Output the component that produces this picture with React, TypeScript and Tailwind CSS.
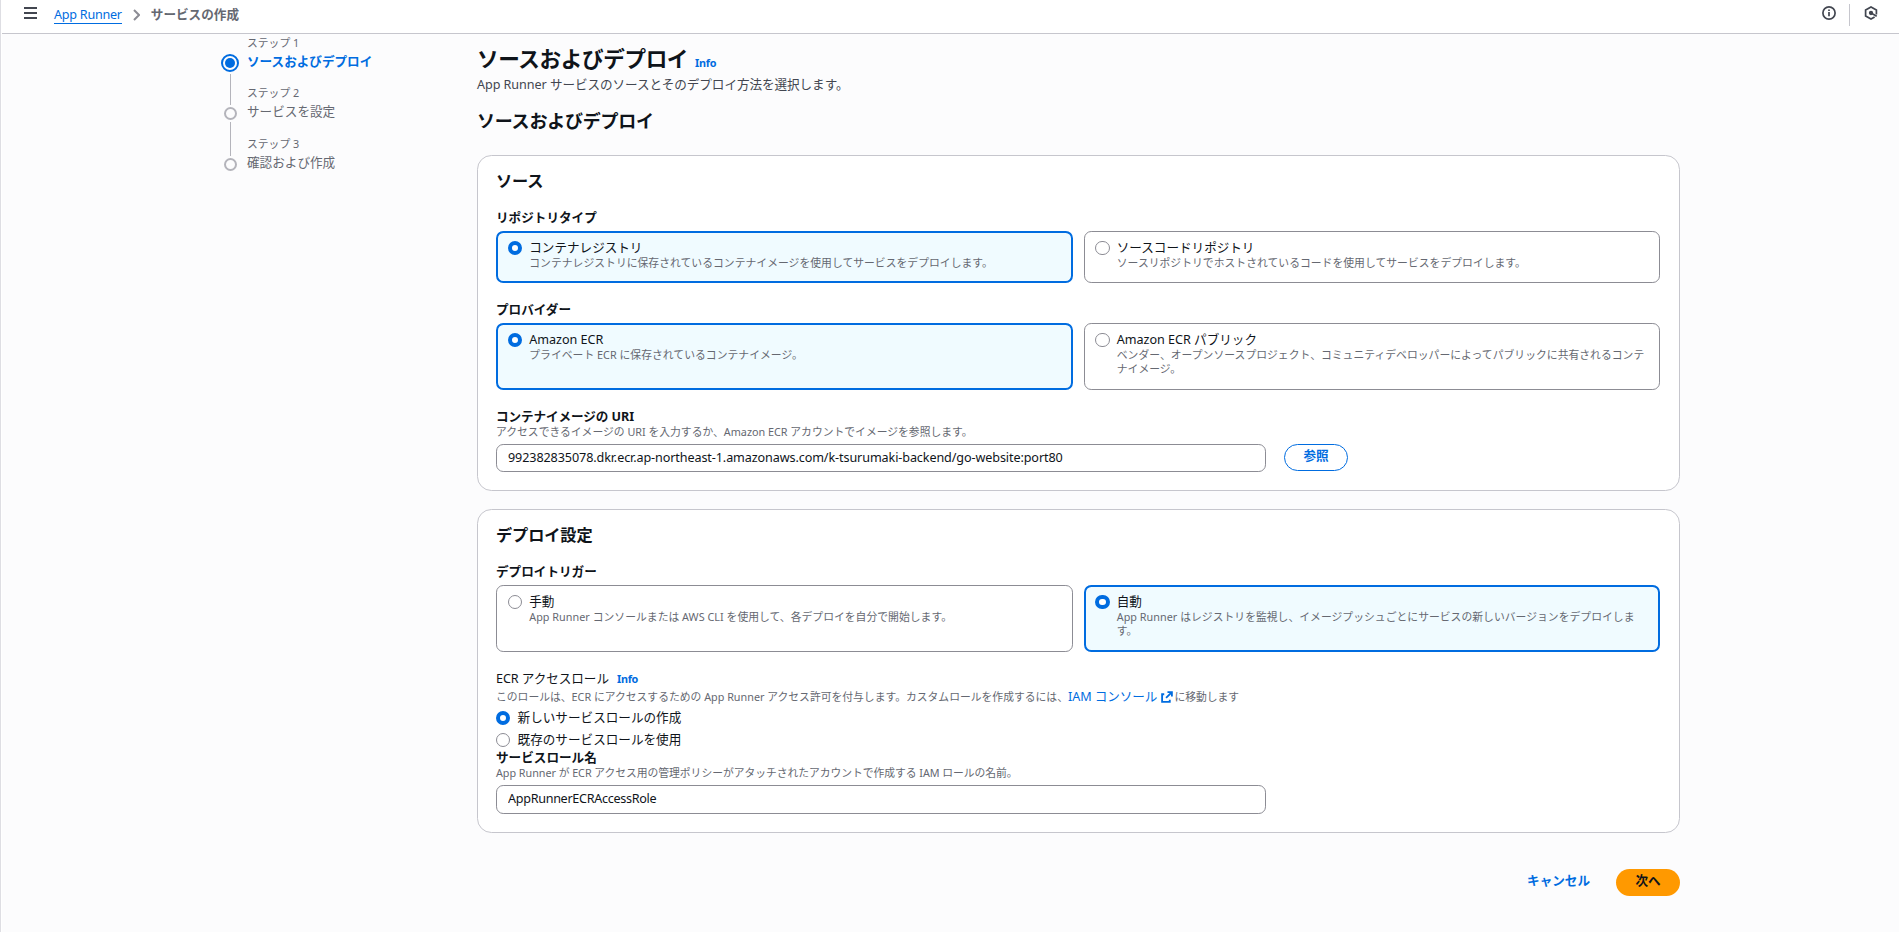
import type { ReactNode } from 'react';

interface OptionProps {
  label: string;
  description: string;
  checked?: boolean;
}

const Radio = ({ checked }: { checked?: boolean }) => (
  <span
    className={
      checked
        ? 'block size-[14.4px] shrink-0 rounded-full border-[4.5px] border-[#006ce0] bg-white'
        : 'block size-[14.4px] shrink-0 rounded-full border border-[#8c8c94] bg-white'
    }
  />
);

const Tile = ({ label, description, checked }: OptionProps) => (
  <div
    className={`flex flex-1 gap-[7.2px] rounded-[7.2px] pb-[9px] ${
      checked ? 'border-2 border-[#006ce0] bg-[#f0fbff] px-[9.7px] pt-[6px]' : 'border border-[#8c8c94] bg-white px-[10.7px] pt-[7px]'
    }`}
  >
    <div className="pt-[2px]">
      <Radio checked={checked} />
    </div>
    <div>
      <div className="leading-[18px] tracking-[-0.02px]">{label}</div>
      <div className="-mt-px text-[10.8px] leading-[14.4px] tracking-[0.03px] text-[#656871]">{description}</div>
    </div>
  </div>
);

const Container = ({ title, className, children }: { title: string; className?: string; children: ReactNode }) => (
  <section className={`rounded-[14.4px] border border-[#c6c6cd] bg-white pt-[15px] pr-[19px] pl-[18px] ${className}`}>
    <h3 className="text-[16.2px] leading-[20px] font-bold tracking-[-0.1px]">{title}</h3>
    {children}
  </section>
);

const Step = ({ index, title, active, last }: { index: number; title: string; active?: boolean; last?: boolean }) => (
  <li className="flex h-[50.4px] gap-[8px]">
    <div className="flex w-[18px] flex-col items-center">
      {active ? (
        <span className="mt-[20px] flex size-[18px] shrink-0 items-center justify-center rounded-full border-2 border-[#006ce0]">
          <span className="size-[10px] rounded-full bg-[#006ce0]" />
        </span>
      ) : (
        <span className="mt-[23px] size-[13px] shrink-0 rounded-full border-2 border-[#b4b4bb]" />
      )}
      {!last && <span className={`mt-[2px] w-px shrink-0 bg-[#b4b4bb] ${active ? 'h-[31px]' : 'h-[34px]'}`} />}
    </div>
    <div>
      <div className="mb-px text-[10.8px] leading-[18px] text-[#656871]">ステップ {index}</div>
      <div className={`leading-[18px] ${active ? 'font-bold text-[#006ce0]' : 'text-[#656871]'}`}>{title}</div>
    </div>
  </li>
);

const Header = () => (
  <header className="flex h-[34px] items-start border-b border-[#c6c6cd] bg-white pr-[21px] pl-[22px]">
    <svg className="mt-[7px] h-3 w-[13px]" viewBox="0 0 13 12" stroke="#424650" strokeWidth="2">
      <path d="M0 1h13M0 6h13M0 11h13" />
    </svg>
    <nav className="mt-[6px] ml-[17px] flex items-center leading-[18px]">
      <a className="border-b border-[#006ce0] leading-[16px] tracking-[-0.25px] text-[#006ce0]">App Runner</a>
      <svg className="mx-[11px] h-[12px] w-[7px]" viewBox="0 0 7 12" fill="none" stroke="#8c8c94" strokeWidth="2">
        <path d="M1 1l5 5-5 5" />
      </svg>
      <span className="font-bold text-[#656871]">サービスの作成</span>
    </nav>
    <div className="ml-auto flex items-start">
      <svg className="mt-[6px] size-[14px]" viewBox="0 0 14 14" fill="none" stroke="#424650" strokeWidth="1.7">
        <circle cx="7" cy="7" r="6.1" />
        <path d="M7 6v4.2M7 3.4v1.6" />
      </svg>
      <span className="mt-1 ml-[13px] h-[22px] w-px bg-[#c6c6cd]" />
      <svg className="mt-[6px] ml-[14px] size-[14px]" viewBox="0 0 14 14" fill="none" stroke="#424650" strokeWidth="1.7">
        <path d="M12.4 8.4V4L7 1 1.6 4v6L7 13l3.6-2" />
        <circle cx="7" cy="7" r="1.3" fill="#424650" />
        <path d="M7.5 7.3l5.2 2.9" />
      </svg>
    </div>
  </header>
);

const Info = () => <a className="text-[10.8px] font-bold tracking-[-0.25px] text-[#006ce0]">Info</a>;

export default function App() {
  return (
    <div
      lang="ja"
      className="h-[932px] overflow-hidden border-l border-[#dedee3] bg-white pr-[3px] pl-px font-['Noto_Sans','Noto_Sans_CJK_JP',sans-serif] text-[12.6px] text-[#0f141a]"
    >
      <div className="h-full bg-[#fcfcfd]">
        <Header />
        <div className="flex pl-[219px]">
          <ol className="w-[256px]">
            <Step index={1} title="ソースおよびデプロイ" active />
            <Step index={2} title="サービスを設定" />
            <Step index={3} title="確認および作成" last />
          </ol>

          <main className="w-[1203px]">
            <div className="mt-[11px] flex items-baseline gap-[7px]">
              <h1 className="text-[21.6px] leading-[27px] font-bold tracking-[-0.38px]">ソースおよびデプロイ</h1>
              <Info />
            </div>
            <p className="mt-[4px] leading-[18px] tracking-[-0.06px] text-[#424650]">
              App Runner サービスのソースとそのデプロイ方法を選択します。
            </p>
            <h2 className="mt-[16px] text-[18px] leading-[22px] font-bold tracking-[-0.24px]">ソースおよびデプロイ</h2>

            <Container title="ソース" className="mt-[23px] h-[336px]">
              <div className="mt-[18px] leading-[18px] font-bold">リポジトリタイプ</div>
              <div className="mt-[4px] flex h-[52px] gap-[11px]">
                <Tile
                  checked
                  label="コンテナレジストリ"
                  description="コンテナレジストリに保存されているコンテナイメージを使用してサービスをデプロイします。"
                />
                <Tile
                  label="ソースコードリポジトリ"
                  description="ソースリポジトリでホストされているコードを使用してサービスをデプロイします。"
                />
              </div>
              <div className="mt-[18px] leading-[18px] font-bold">プロバイダー</div>
              <div className="mt-[4px] flex h-[67px] gap-[11px]">
                <Tile checked label="Amazon ECR" description="プライベート ECR に保存されているコンテナイメージ。" />
                <Tile
                  label="Amazon ECR パブリック"
                  description="ベンダー、オープンソースプロジェクト、コミュニティデベロッパーによってパブリックに共有されるコンテナイメージ。"
                />
              </div>
              <div className="mt-[18px] leading-[18px] font-bold tracking-[-0.08px]">コンテナイメージの URI</div>
              <div className="-mt-px text-[10.8px] leading-[14.4px] text-[#656871]">
                アクセスできるイメージの URI を入力するか、Amazon ECR アカウントでイメージを参照します。
              </div>
              <div className="mt-[4.6px] flex gap-[18px]">
                <input
                  className="h-[28px] w-[770px] rounded-[7.2px] border border-[#8c8c94] bg-white px-[11px] pb-[2px] tracking-[-0.1px]"
                  defaultValue="992382835078.dkr.ecr.ap-northeast-1.amazonaws.com/k-tsurumaki-backend/go-website:port80"
                />
                <button className="h-[27px] w-[64px] rounded-full border-[1.8px] border-[#006ce0] pb-[2px] font-bold text-[#006ce0]">参照</button>
              </div>
            </Container>

            <Container title="デプロイ設定" className="mt-[18px] h-[324px]">
              <div className="mt-[18px] leading-[18px] font-bold">デプロイトリガー</div>
              <div className="mt-[4px] flex h-[67px] gap-[11px]">
                <Tile label="手動" description="App Runner コンソールまたは AWS CLI を使用して、各デプロイを自分で開始します。" />
                <Tile
                  checked
                  label="自動"
                  description="App Runner はレジストリを監視し、イメージプッシュごとにサービスの新しいバージョンをデプロイします。"
                />
              </div>
              <div className="mt-[18px] flex items-baseline gap-[8px] leading-[18px] tracking-[-0.06px]">
                ECR アクセスロール <Info />
              </div>
              <div className="flex items-center text-[10.8px] leading-[18px] text-[#656871]">
                このロールは、ECR にアクセスするための App Runner アクセス許可を付与します。カスタムロールを作成するには、
                <a className="mr-px flex items-center gap-[4px] text-[12.6px] tracking-[-0.06px] text-[#006ce0]">
                  IAM コンソール
                  <svg className="size-[12px]" viewBox="0 0 13 13" fill="none" stroke="#006ce0" strokeWidth="2">
                    <path d="M7 1.2h4.8V6M11.8 1.2L5.5 7.5M3.5 3.5H1.2v8.3h8.3V9.5" />
                  </svg>
                </a>
                に移動します
              </div>
              <div className="mt-[3px] flex items-center gap-[7.2px] leading-[18px]">
                <Radio checked />
                新しいサービスロールの作成
              </div>
              <div className="mt-[4px] flex items-center gap-[7.2px] leading-[18px]">
                <Radio />
                既存のサービスロールを使用
              </div>
              <div className="leading-[18px] font-bold">サービスロール名</div>
              <div className="-mt-px text-[10.8px] leading-[14.4px] tracking-[-0.04px] text-[#656871]">
                App Runner が ECR アクセス用の管理ポリシーがアタッチされたアカウントで作成する IAM ロールの名前。
              </div>
              <input
                className="mt-[4.6px] block h-[29px] w-[770px] rounded-[7.2px] border border-[#8c8c94] bg-white px-[11px] pb-[2px] tracking-[-0.3px]"
                defaultValue="AppRunnerECRAccessRole"
              />
            </Container>

            <div className="mt-[36px] flex items-center justify-end gap-[26px]">
              <button className="pb-[2px] font-bold text-[#006ce0]">キャンセル</button>
              <button className="h-[27px] w-[64px] rounded-full bg-[#ff9900] pb-[2px] font-bold">次へ</button>
            </div>
          </main>
        </div>
      </div>
    </div>
  );
}
